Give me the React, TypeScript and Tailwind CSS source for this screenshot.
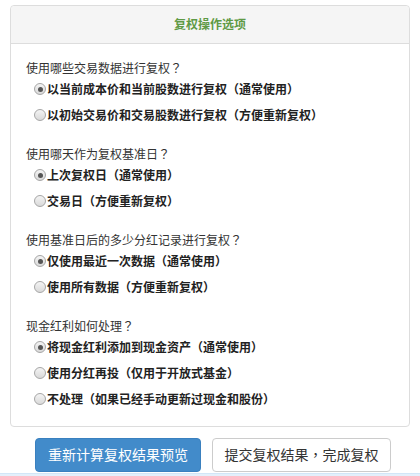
import React from "react";

type Q = { q: string; opts: string[] };

const questions: Q[] = [
  {
    q: "使用哪些交易数据进行复权？",
    opts: ["以当前成本价和当前股数进行复权（通常使用）", "以初始交易价和交易股数进行复权（方便重新复权）"],
  },
  {
    q: "使用哪天作为复权基准日？",
    opts: ["上次复权日（通常使用）", "交易日（方便重新复权）"],
  },
  {
    q: "使用基准日后的多少分红记录进行复权？",
    opts: ["仅使用最近一次数据（通常使用）", "使用所有数据（方便重新复权）"],
  },
  {
    q: "现金红利如何处理？",
    opts: [
      "将现金红利添加到现金资产（通常使用）",
      "使用分红再投（仅用于开放式基金）",
      "不处理（如果已经手动更新过现金和股份）",
    ],
  },
];

function T({ text }: { text: string }) {
  const parts = text.split(/([？，（）])/);
  return (
    <>
      {parts.map((p, i) =>
        /^[？，（）]$/.test(p) ? (
          <span key={i} className="font-['Noto_Sans_CJK_TC',sans-serif]">
            {p}
          </span>
        ) : (
          <React.Fragment key={i}>{p}</React.Fragment>
        )
      )}
    </>
  );
}

function Radio({ checked }: { checked: boolean }) {
  return (
    <span className="relative flex items-center justify-center w-[12px] h-[12px] rounded-full border border-[#a6a6a6] bg-gradient-to-b from-[#f4f4f4] to-[#d9d9d9] shrink-0">
      {checked && <span className="w-[5px] h-[5px] rounded-full bg-[#555]" />}
    </span>
  );
}

export default function App() {
  return (
    <div className="w-[420px] h-[476px] bg-white overflow-hidden font-['Liberation_Sans','Noto_Sans_CJK_SC',sans-serif] flex flex-col">
      <div className="mx-[10px] mt-[5px] border border-[#dddddd] rounded-[4px] bg-white">
        <div className="h-[38px] bg-[#f5f5f5] border-b border-[#dddddd] rounded-t-[4px] flex items-center justify-center">
          <span className="text-[12px] font-semibold text-[#5f9a45]">复权操作选项</span>
        </div>
        <div className="pt-[16px] pb-[14px] pl-[15px] flex flex-col gap-[18px]">
          {questions.map((item, qi) => (
            <div key={qi} className="flex flex-col">
              <div className="h-[16px] leading-[16px] text-[12px] text-[#333]">
                <T text={item.q} />
              </div>
              {item.opts.map((o, oi) => (
                <label key={oi} className="h-[26px] flex items-center pl-[8px] gap-[1px]">
                  <Radio checked={oi === 0} />
                  <span className="text-[12px] font-bold text-[#222] leading-[26px]">
                    <T text={o} />
                  </span>
                </label>
              ))}
            </div>
          ))}
        </div>
      </div>
      <div className="flex pl-[35px] gap-[11px] mt-[11px]">
        <button className="w-[166px] h-[34px] rounded-[4px] bg-[#428bca] border border-[#3a80bf] text-white text-[14px]">
          重新计算复权结果预览
        </button>
        <button className="w-[179px] h-[34px] rounded-[4px] bg-white border border-[#cccccc] text-[#333] text-[14px]">
          <T text="提交复权结果，完成复权" />
        </button>
      </div>
      <div className="mt-[1px] h-[10px] bg-[#e3f0fb] border-t border-[#d2e6f7]" />
    </div>
  );
}
